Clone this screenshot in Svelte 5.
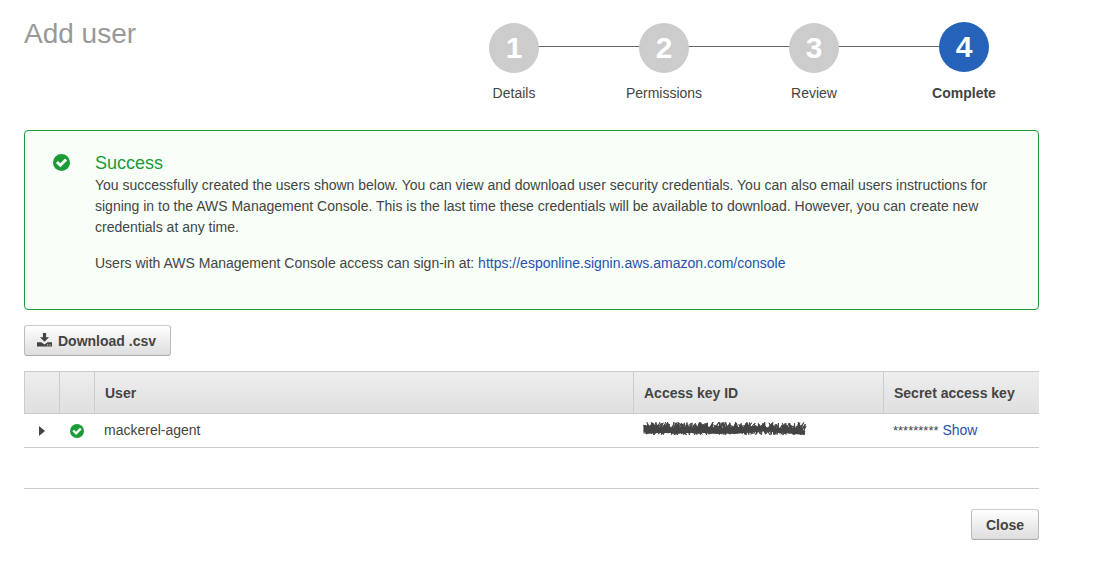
<script>
  const steps = ['Details', 'Permissions', 'Review', 'Complete'];
  const current = 3;
  let expanded = $state(false);

  // Hand-drawn strokes that hide the access key
  function scribble(seed) {
    let state = seed;
    const random = () => (state = (state * 16807) % 2147483647) / 2147483647;
    let d = '';
    for (let i = 0; i < 110; i++) {
      const x = 1 + (i / 109) * 161 + (random() - 0.5) * 10;
      const y = i % 2 ? random() * 5 : 13 - random() * 4;
      d += `${i ? 'L' : 'M'}${Math.max(1, Math.min(163, x)).toFixed(1)} ${y.toFixed(1)}`;
    }
    return d;
  }
</script>

{#snippet check(size)}
  <svg class="check" width={size} height={size} viewBox="0 0 17 17" aria-hidden="true">
    <circle cx="8.5" cy="8.5" r="8.5" fill="#1b9a38" />
    <path d="M3.9 7.9 7.4 11.3 13.1 5.6" fill="none" stroke="#fff" stroke-width="2.8" />
  </svg>
{/snippet}

<main>
  <header>
    <h1>Add user</h1>
    <ol class="steps">
      {#each steps as step, i}
        <li class:active={i === current} aria-current={i === current ? 'step' : undefined}>
          <span class="track"><span class="number">{i + 1}</span></span>
          <span class="label">{step}</span>
        </li>
      {/each}
    </ol>
  </header>

  <section class="alert">
    {@render check(17)}
    <div class="message">
      <h2>Success</h2>
      <p>
        You successfully created the users shown below. You can view and download user security
        credentials. You can also email users instructions for signing in to the AWS Management
        Console. This is the last time these credentials will be available to download. However, you
        can create new credentials at any time.
      </p>
      <p>
        Users with AWS Management Console access can sign-in at:
        <a href="https://esponline.signin.aws.amazon.com/console">https://esponline.signin.aws.amazon.com/console</a>
      </p>
    </div>
  </section>

  <button class="btn download" type="button">
    <svg width="15" height="14" viewBox="0 0 15 14" aria-hidden="true">
      <path d="M5.9 0h3.2v4.2h3L7.5 8.8 2.9 4.2h3z" fill="#444" />
      <path
        d="M0 9.2h4.4L7.5 11.6l3.1-2.4H15V13.4H0zM10 11.4v1h1.2v-1zM12.4 11.4v1h1.2v-1z"
        fill="#444"
        fill-rule="evenodd"
      />
    </svg>
    Download .csv
  </button>

  <table>
    <thead>
      <tr>
        <th class="icon"></th>
        <th class="icon"></th>
        <th>User</th>
        <th class="key">Access key ID</th>
        <th class="secret">Secret access key</th>
      </tr>
    </thead>
    <tbody>
      <tr>
        <td class="icon">
          <button
            class="toggle"
            type="button"
            aria-label="Details of mackerel-agent"
            aria-expanded={expanded}
            onclick={() => (expanded = !expanded)}
          >
            <svg width="6" height="10" viewBox="0 0 6 10"><path d="M0 0 6 5 0 10z" fill="#444" /></svg>
          </button>
        </td>
        <td class="icon">{@render check(14)}</td>
        <td class="name">mackerel-agent</td>
        <td>
          <svg class="hidden-key" width="165" height="17" viewBox="0 0 165 17" aria-hidden="true">
            <path d={scribble(1234)} />
            <path d={scribble(98765)} />
            <path d={scribble(424242)} />
            <path d={scribble(777001)} />
            <path d="M3 5 34 10 60 6 92 10 120 7 162 11M3 10 40 7 74 10 110 6 162 11M4 7 50 9 90 7 160 8" stroke-width="4" />
          </svg>
        </td>
        <td><span class="stars">*********</span> <a href="#show">Show</a></td>
      </tr>
    </tbody>
  </table>

  <footer>
    <button class="btn" type="button">Close</button>
  </footer>
</main>

<style>
  :global(body) {
    background: #fff;
  }
  main {
    padding: 22px 72px 24px 24px;
    font: 14px/21px 'Liberation Sans', Arial, sans-serif;
    color: #444;
  }
  h1,
  h2,
  p,
  ol {
    margin: 0;
    padding: 0;
  }
  a {
    color: #2850b0;
    text-decoration: none;
  }
  header {
    display: flex;
    justify-content: space-between;
    align-items: flex-start;
    margin-bottom: 26px;
  }
  h1 {
    font-size: 28px;
    line-height: 24px;
    font-weight: 400;
    color: #999;
  }
  .steps {
    display: flex;
    list-style: none;
  }
  li {
    width: 150px;
    text-align: center;
  }
  .track {
    display: flex;
    justify-content: center;
    padding-top: 1px;
    margin-bottom: 10px;
    background: linear-gradient(#666, #666) 0 24px / 100% 1px no-repeat;
  }
  li:first-child .track {
    background-position: 100% 24px;
    background-size: 50% 1px;
  }
  li:last-child .track {
    background-size: 50% 1px;
  }
  .number {
    width: 50px;
    height: 50px;
    border-radius: 50%;
    background: #ccc;
    color: #fff;
    font-size: 30px;
    font-weight: 700;
    line-height: 50px;
  }
  .active .track {
    padding: 0 0 1px;
  }
  .active .number {
    background: #2562b9;
  }
  .label {
    display: block;
  }
  .active .label {
    font-weight: 700;
  }
  .alert {
    display: flex;
    gap: 25px;
    padding: 21px 36px 35px 28px;
    border: 1px solid #1b9a38;
    border-radius: 4px;
    background: #f7fff8;
    margin-bottom: 15px;
  }
  .check {
    display: block;
    flex: none;
  }
  .alert .check {
    margin-top: 2px;
  }
  h2 {
    font-size: 18px;
    line-height: 23px;
    font-weight: 400;
    color: #1b9a38;
  }
  p + p {
    margin-top: 15px;
  }
  .btn {
    display: flex;
    align-items: center;
    gap: 6px;
    padding: 5px 14px 3px;
    border: 1px solid #bbb;
    border-color: #ccc #bbb #aaa;
    border-radius: 3px;
    background: linear-gradient(#fff, #ddd);
    color: #444;
    font: 700 14px/21px 'Liberation Sans', Arial, sans-serif;
  }
  .download {
    padding-left: 12px;
    margin-bottom: 15px;
  }
  .download svg {
    margin-bottom: 3px;
  }
  table {
    width: 100%;
    border-spacing: 0;
    table-layout: fixed;
  }
  th,
  td {
    text-align: left;
    padding: 6px 0 6px 10px;
    border-bottom: 1px solid #ccc;
  }
  th {
    padding: 11px 0 9px 10px;
    height: 21px;
    border-top: 1px solid #ccc;
    border-left: 1px solid #ccc;
    background: linear-gradient(#eee, #dfdfdf);
  }
  .icon {
    width: 34px;
    padding-left: 0;
    padding-right: 0;
  }
  td.icon {
    padding-left: 1px;
  }
  td .check {
    margin: 0 auto;
  }
  .key {
    width: 239px;
  }
  .secret {
    width: 145px;
  }
  .toggle {
    display: flex;
    margin: 0 auto;
    padding: 0;
    border: 0;
    background: none;
  }
  .hidden-key {
    display: block;
    fill: none;
    stroke: #444;
    stroke-width: 1;
  }
  .stars {
    font-size: 13px;
  }
  footer {
    display: flex;
    justify-content: flex-end;
    margin-top: 40px;
    padding-top: 20px;
    border-top: 1px solid #ccc;
  }
</style>
